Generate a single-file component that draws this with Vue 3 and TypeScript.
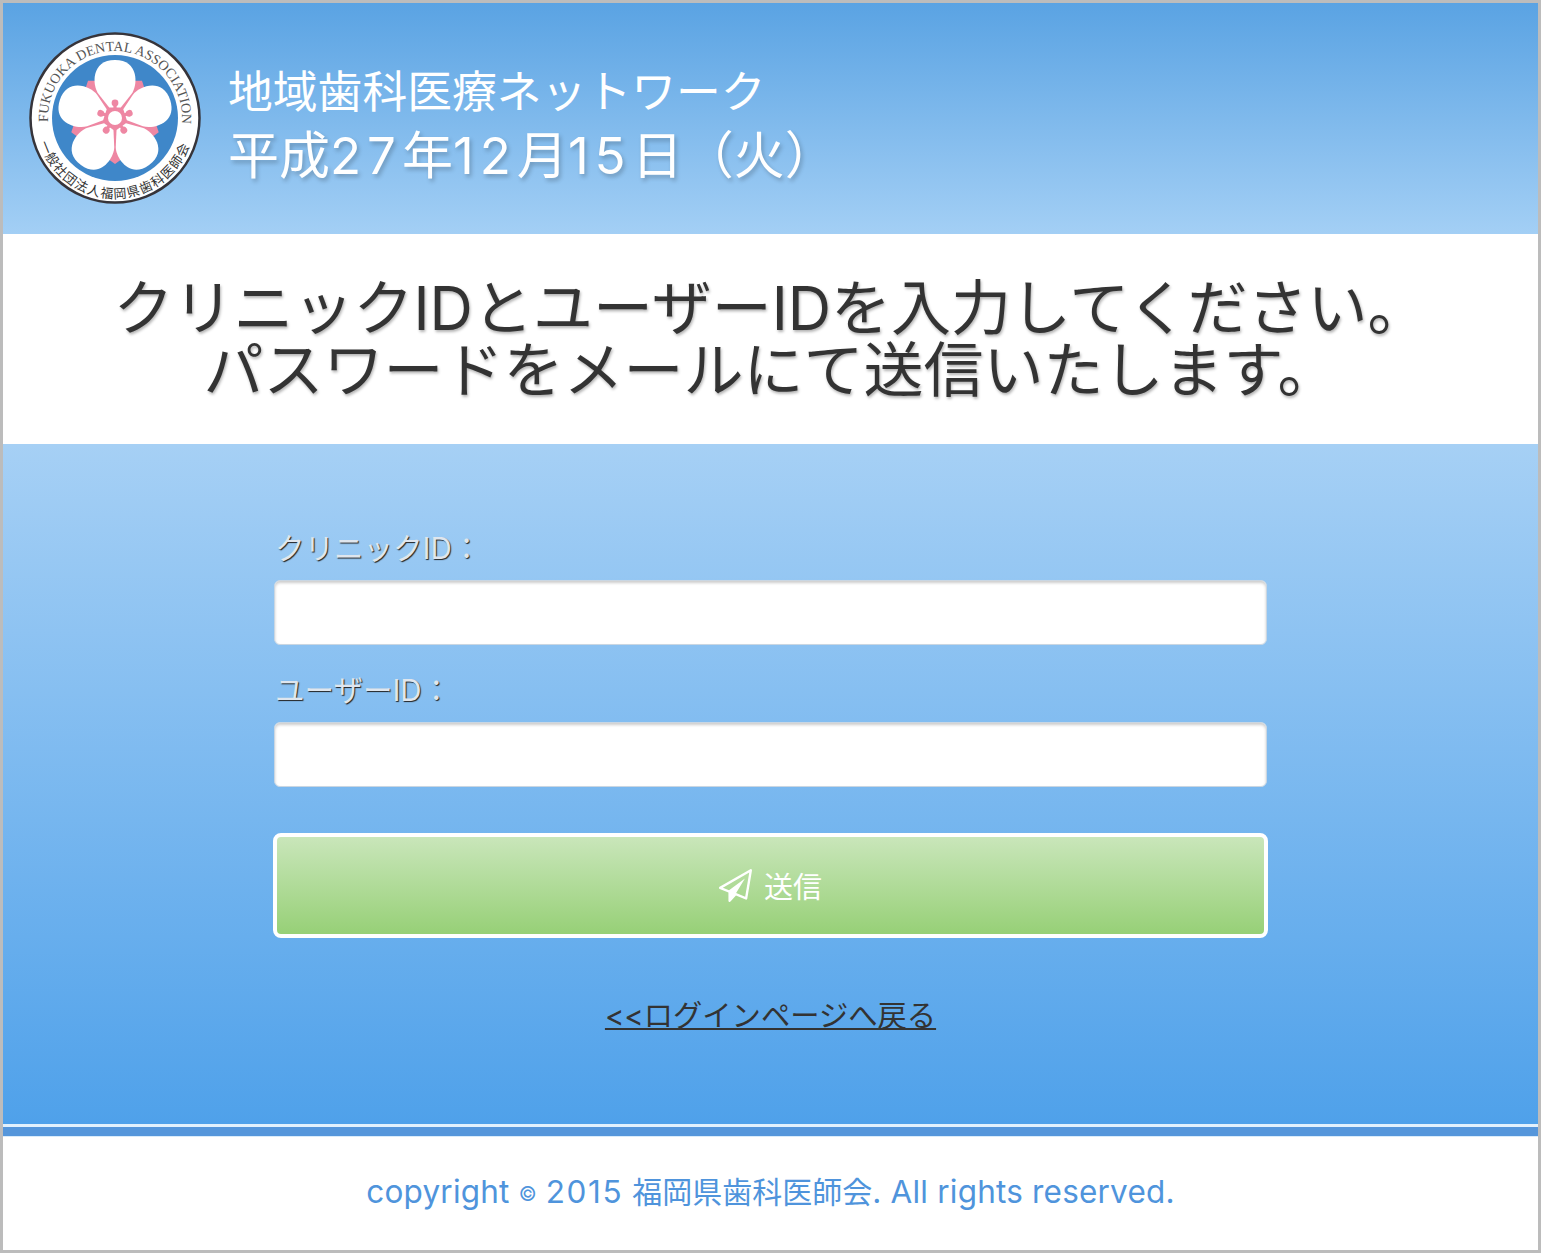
<script setup lang="ts">
const petalAngles: number[] = [0, 72, 144, 216, 288]
</script>

<template>
  <div class="page">
    <header class="head">
      <svg class="logo" viewBox="0 0 172 172" width="172" height="172">
        <defs>
          <path id="arcTop" d="M 19.12 90 A 67 67 0 1 1 152.52 94" />
          <path id="arcBottom" d="M 10 109 A 79 79 0 0 0 162 109" />
        </defs>
        <circle cx="86" cy="86" r="84.5" fill="#fff" stroke="#36343a" stroke-width="2.5" />
        <circle cx="86" cy="86" r="63" fill="#3f87c9" />
        <text class="ring-text">
          <textPath href="#arcTop" textLength="220" lengthAdjust="spacing">FUKUOKA DENTAL ASSOCIATION</textPath>
        </text>
        <text class="ring-text jp">
          <textPath href="#arcBottom" startOffset="2" textLength="197" lengthAdjust="spacing">一般社団法人福岡県歯科医師会</textPath>
        </text>
        <g transform="translate(86 86)">
          <polygon points="0,46 -43.7,14.2 -27,-37.2 27,-37.2 43.7,14.2" fill="#ee87a3" />
          <path
            v-for="a in petalAngles"
            :key="a"
            :transform="`rotate(${a})`"
            d="M-5.8 -10.6 L-16.5 -24 C-23 -33 -24 -58 0 -58 C24 -58 23 -33 16.5 -24 L5.8 -10.6 Z"
            fill="#fff"
          />
          <circle r="10" fill="#ee87a3" />
          <g v-for="a in petalAngles" :key="a" :transform="`rotate(${a})`">
            <rect x="-1.6" y="-15" width="3.2" height="8" fill="#ee87a3" />
            <circle cy="-15" r="3.4" fill="#ee87a3" />
          </g>
          <circle r="7" fill="#fff" />
        </g>
      </svg>
      <div class="head-text">
        <div class="site">地域歯科医療ネットワーク</div>
        <div class="date">平成<span class="num">27</span>年<span class="num">12</span>月<span class="num">15</span>日（火）</div>
      </div>
    </header>

    <section class="intro">
      <h1 class="intro-title">クリニックIDとユーザーIDを入力してください。<br />パスワードをメールにて送信いたします。</h1>
    </section>

    <main class="form-area">
      <form class="form" @submit.prevent>
        <label class="label" for="clinic">クリニックID：</label>
        <input id="clinic" class="input" type="text" />
        <label class="label" for="user">ユーザーID：</label>
        <input id="user" class="input" type="text" />
        <button class="send" type="submit">
          <svg class="plane" viewBox="0 0 1792 1792" width="33" height="33">
            <path
              fill="#fff"
              d="M1764 11q33 24 27 64l-256 1536q-5 29-32 45-14 8-31 8-11 0-24-5l-527-215-298 327q-18 21-47 21-14 0-23-4-19-7-30-23.5t-11-36.5v-452l-472-193q-37-14-40-55-3-39 32-59l1664-960q35-21 68 2zm-342 1499l221-1323-1434 827 336 137 863-639-478 797z"
            />
          </svg>
          <span class="send-text">送信</span>
        </button>
        <a class="back" href="#">&lt;&lt;ログインページへ戻る</a>
      </form>
    </main>

    <div class="rule"></div>

    <footer class="foot">copyright <span class="copy">©</span> <span class="year">2015</span> <span class="foot-jp">福岡県歯科医師会</span>. All rights reserved.</footer>
  </div>
</template>

<style>
html,
body {
  margin: 0;
  background: #fff;
}
</style>

<style scoped>
.page {
  box-sizing: border-box;
  width: 1541px;
  height: 1253px;
  border: 3px solid #bcbcbc;
  display: flex;
  flex-direction: column;
  font-family: Inter, "Noto Sans CJK JP", sans-serif;
  background: #fff;
  overflow: hidden;
}
.head {
  height: 231px;
  flex: none;
  box-sizing: border-box;
  padding: 29px 0 0 26px;
  display: flex;
  align-items: flex-start;
  background: linear-gradient(#5aa3e3, #a3cff5);
}
.logo {
  flex: none;
  display: block;
}
.head-text {
  margin-left: 27px;
  padding-top: 28px;
  color: #fff;
}
.site {
  font-size: 44.8px;
  line-height: 64px;
}
.date {
  font-size: 51px;
  line-height: 64px;
  text-shadow: 2px 3px 4px rgba(0, 0, 0, 0.22);
}
.num {
  letter-spacing: 6px;
}
.ring-text {
  font-family: "Liberation Serif", "Noto Sans CJK JP", serif;
  font-size: 14px;
  fill: #555;
}
.ring-text.jp {
  font-size: 13px;
  fill: #333;
}
.intro {
  height: 210px;
  flex: none;
  box-sizing: border-box;
  padding-top: 43px;
  background: #fff;
}
.intro-title {
  margin: 0;
  text-align: center;
  font-size: 60px;
  line-height: 62px;
  font-weight: 400;
  color: #333;
  text-shadow: 1px 2px 3px rgba(0, 0, 0, 0.3);
}
.form-area {
  height: 680px;
  flex: none;
  box-sizing: border-box;
  padding-top: 85px;
  background: linear-gradient(#a6d0f5, #4fa1ea);
}
.form {
  width: 995px;
  margin-left: 270px;
  display: flex;
  flex-direction: column;
}
.label {
  font-size: 29.5px;
  line-height: 38px;
  padding-left: 2px;
  color: #dfe6ee;
  text-shadow: 1px 1px 1px #222;
  margin-bottom: 13px;
}
.input {
  box-sizing: border-box;
  width: 993px;
  margin-left: 1px;
  height: 65px;
  border: 1px solid #c9d6e2;
  border-radius: 6px;
  background: #fff;
  box-shadow: inset 0 2px 3px rgba(0, 0, 0, 0.2);
  margin-bottom: 26px;
  outline: none;
}
.send {
  box-sizing: border-box;
  width: 995px;
  height: 105px;
  margin-top: 20px;
  border: 4px solid #fff;
  border-radius: 8px;
  background: linear-gradient(#c9e6ba, #97d077);
  color: #fff;
  font-family: inherit;
  font-size: 29px;
  display: flex;
  align-items: center;
  justify-content: center;
  gap: 12px;
  padding: 0;
}
.plane {
  display: block;
}
.send-text {
  padding-bottom: 2px;
}
.back {
  margin-top: 57px;
  align-self: center;
  font-size: 29.3px;
  line-height: 42px;
  color: #333;
  text-decoration: underline;
}
.rule {
  height: 13px;
  flex: none;
  box-sizing: border-box;
  border-top: 3px solid #e2f1fd;
  border-bottom: 1px solid #d9ebfb;
  background: #5596db;
}
.foot {
  flex: 1;
  text-align: center;
  font-size: 31.5px;
  letter-spacing: 0.2px;
  line-height: 36px;
  padding-top: 37px;
  color: #4f94dc;
}
.year {
  letter-spacing: 1.6px;
}
.foot-jp {
  font-size: 30px;
  letter-spacing: 0;
}
.copy {
  font-size: 0.62em;
  vertical-align: 2px;
}
</style>
